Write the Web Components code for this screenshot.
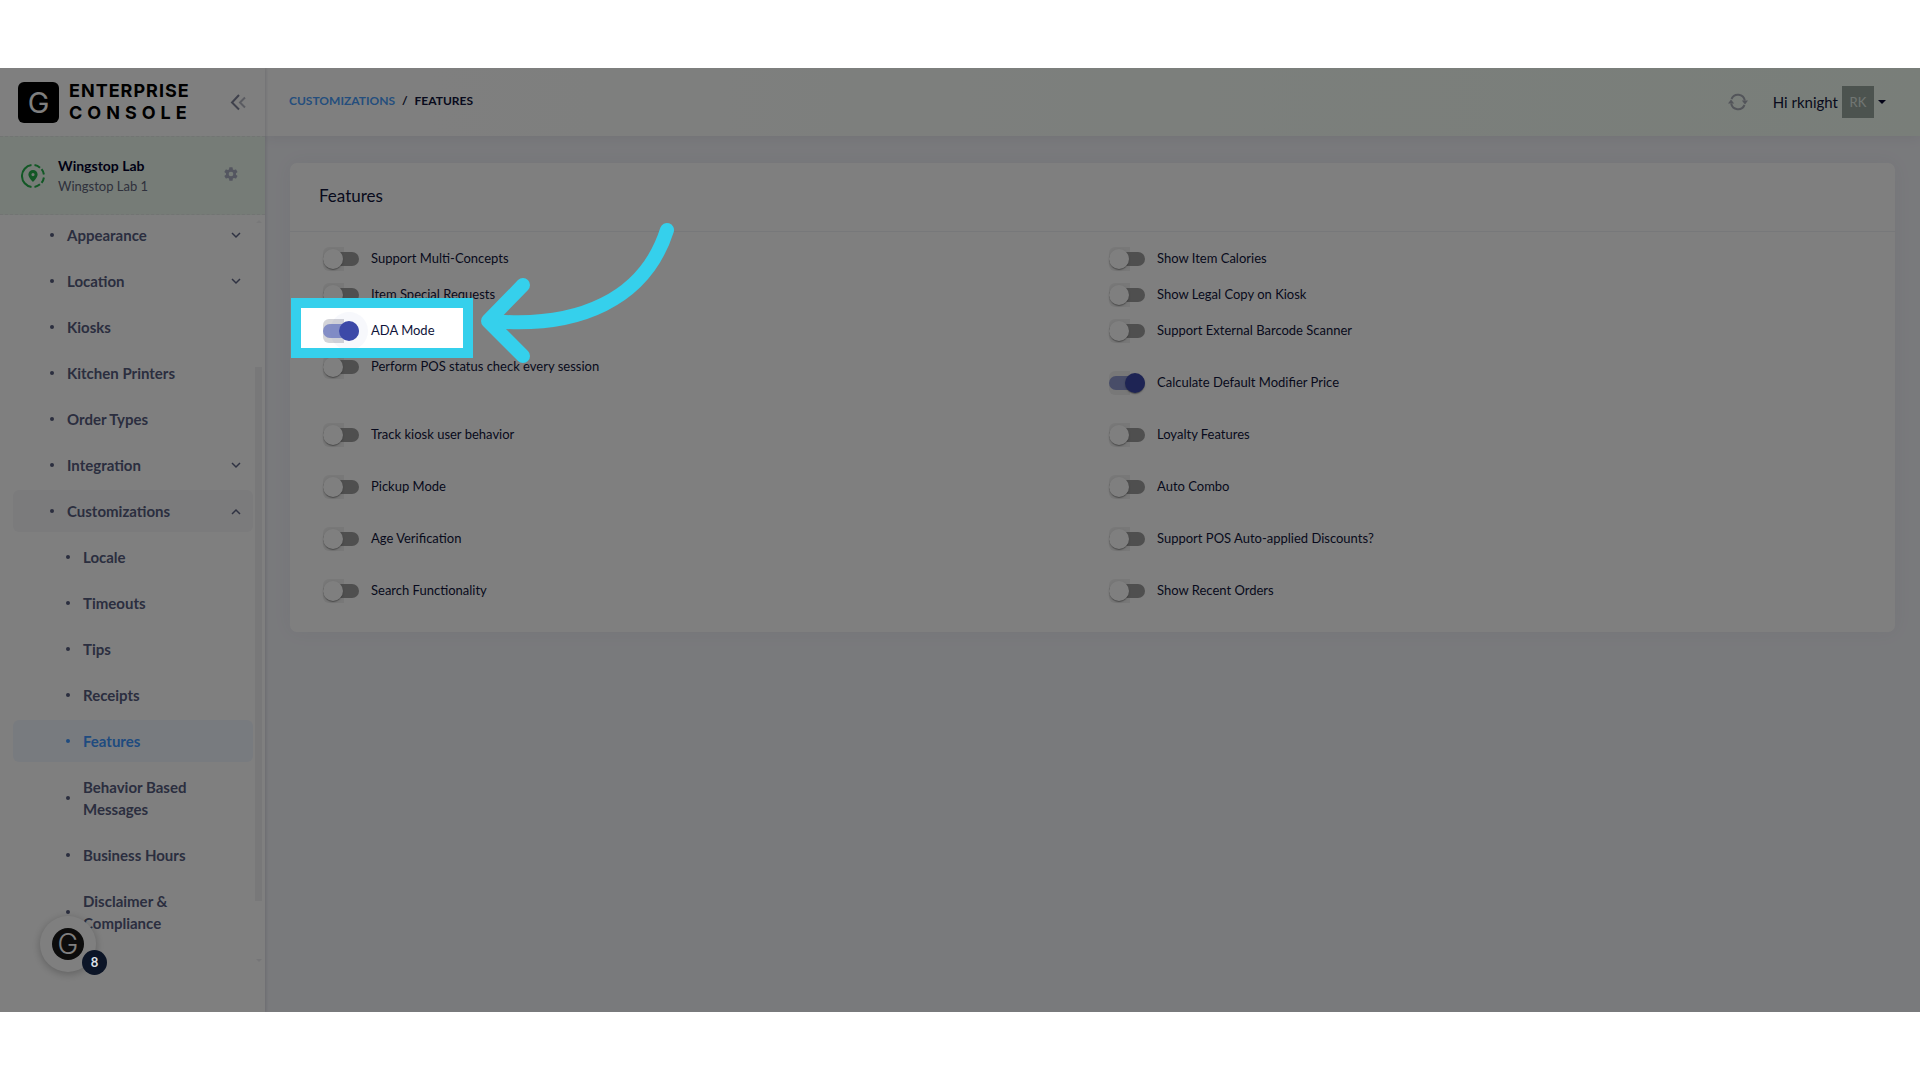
<!DOCTYPE html>
<html lang="en">
<head>
<meta charset="utf-8">
<title>Enterprise Console - Features</title>
<style>
  body {
    margin: 0;
    padding: 68px 0;
    background: #fff;
    color: #10143a;
    font-family: Lato, "Liberation Sans", sans-serif;
    font-size: 13px;
  }
</style>
</head>
<body>
<console-shell>
  <console-sidebar slot="sidebar">
    <nav-item expandable>Appearance</nav-item>
    <nav-item expandable>Location</nav-item>
    <nav-item>Kiosks</nav-item>
    <nav-item>Kitchen Printers</nav-item>
    <nav-item>Order Types</nav-item>
    <nav-item expandable>Integration</nav-item>
    <nav-item expandable open>Customizations
      <nav-item slot="children" sub>Locale</nav-item>
      <nav-item slot="children" sub>Timeouts</nav-item>
      <nav-item slot="children" sub>Tips</nav-item>
      <nav-item slot="children" sub>Receipts</nav-item>
      <nav-item slot="children" sub active>Features</nav-item>
      <nav-item slot="children" sub>Behavior Based Messages</nav-item>
      <nav-item slot="children" sub>Business Hours</nav-item>
      <nav-item slot="children" sub>Disclaimer &amp; Compliance</nav-item>
    </nav-item>
  </console-sidebar>
  <console-header slot="header"></console-header>
  <feature-card heading="Features">
    <feature-switch>Support Multi-Concepts</feature-switch>
    <feature-switch>Show Item Calories</feature-switch>
    <feature-switch>Item Special Requests</feature-switch>
    <feature-switch>Show Legal Copy on Kiosk</feature-switch>
    <feature-switch checked focused>ADA Mode<tour-spotlight slot="overlay"></tour-spotlight></feature-switch>
    <feature-switch>Support External Barcode Scanner</feature-switch>
    <feature-switch>Perform POS status check every session</feature-switch>
    <feature-switch spaced checked>Calculate Default Modifier Price</feature-switch>
    <feature-switch spaced>Track kiosk user behavior</feature-switch>
    <feature-switch spaced>Loyalty Features</feature-switch>
    <feature-switch spaced>Pickup Mode</feature-switch>
    <feature-switch spaced>Auto Combo</feature-switch>
    <feature-switch spaced>Age Verification</feature-switch>
    <feature-switch spaced>Support POS Auto-applied Discounts?</feature-switch>
    <feature-switch spaced>Search Functionality</feature-switch>
    <feature-switch spaced>Show Recent Orders</feature-switch>
  </feature-card>
  <help-launcher slot="launcher" count="8"></help-launcher>
</console-shell>

<script>
class ConsoleShell extends HTMLElement {
  constructor() {
    super();
    this.attachShadow({ mode: 'open' });
    this.shadowRoot.innerHTML = `
      <style>
        :host {
          display: grid;
          grid-template-columns: 265px 1fr;
          min-height: calc(100vh - 136px);
          position: relative;
          overflow: hidden;
          background: #f3f4f9;
        }
        .page { display: flex; flex-direction: column; min-width: 0; }
        main { padding: 27px 25px; }
      </style>
      <slot name="sidebar"></slot>
      <div class="page">
        <slot name="header"></slot>
        <main><slot></slot></main>
      </div>
      <slot name="launcher"></slot>
    `;
  }
}

class ConsoleSidebar extends HTMLElement {
  constructor() {
    super();
    this.attachShadow({ mode: 'open' });
    this.shadowRoot.innerHTML = `
      <style>
        :host {
          display: flex;
          flex-direction: column;
          position: relative;
          background: #fff;
          box-shadow: 1px 0 3px rgba(30, 30, 60, .14);
        }
        button { border: 0; padding: 0; background: none; display: flex; }
        .brand {
          display: flex;
          align-items: center;
          height: 68px;
          box-sizing: border-box;
          padding: 0 18px;
          gap: 10px;
        }
        .mark {
          width: 41px;
          height: 41px;
          border-radius: 6px;
          background: #000;
          color: #fff;
          font: 400 29px/41px Inter, sans-serif;
          text-align: center;
        }
        .name { flex: 1; font: 700 18px/22px Inter, sans-serif; color: #000; }
        .name span { display: block; letter-spacing: 1px; }
        .name .wide { letter-spacing: 5px; }
        .account {
          display: flex;
          align-items: center;
          gap: 13px;
          height: 79px;
          box-sizing: border-box;
          padding: 0 26px 0 21px;
          background: #ecf9ef;
          border-top: 1px dashed #e4e9e6;
          border-bottom: 1px dashed #e4e9e6;
        }
        .account button { margin-bottom: 4px; }
        .who { flex: 1; line-height: 20px; }
        .who strong { display: block; font-size: 14px; color: #00002a; }
        .who span { color: #5e6278; }
        nav {
          flex: 1;
          display: flex;
          flex-direction: column;
          gap: 4px;
          margin-top: -1px;
          padding: 0 12px 40px 13px;
        }
        .bar {
          position: absolute;
          right: 3px;
          top: 152px;
          bottom: 50px;
          width: 7px;
          display: flex;
          flex-direction: column;
          align-items: center;
          justify-content: space-between;
        }
        .thumb { width: 7px; height: 72%; margin-top: 86px; background: #f1f1f3; }
        .up, .down { border: 3px solid transparent; }
        .up { border-bottom-color: #f1f1f3; border-top: 0; }
        .down { border-top-color: #eaeaee; border-bottom: 0; }
      </style>
      <div class="brand">
        <div class="mark">G</div>
        <div class="name"><span>ENTERPRISE</span><span class="wide">CONSOLE</span></div>
        <button aria-label="Collapse menu">
          <svg width="17" height="17" viewBox="0 0 17 17" fill="none" stroke-width="2">
            <path d="M9 1 2 8.500l7 7" stroke="#7e8299"/>
            <path d="M15 3.500 10 8.500l5 5" stroke="#b4b6c2"/>
          </svg>
        </button>
      </div>
      <div class="account">
        <svg width="24" height="24" viewBox="0 0 24 24">
          <g fill="none" stroke="#25b04b" stroke-width="2">
            <path d="M10.500 1.100A11 11 0 0 0 10.500 22.900"/>
            <path d="M13.500 1.100A11 11 0 0 1 19 3.700M20.600 5.200A11 11 0 0 1 22.900 10.500M22.900 13.500A11 11 0 0 1 20.600 18.800M19 20.300A11 11 0 0 1 13.500 22.900"/>
          </g>
          <path fill="#25b04b" fill-rule="evenodd" d="M12 6a4.600 4.600 0 0 0-4.600 4.600C7.400 14 12 18 12 18s4.600-4 4.600-7.400A4.600 4.600 0 0 0 12 6zm0 3a1.600 1.600 0 1 1 0 3.200A1.600 1.600 0 0 1 12 9z"/>
        </svg>
        <div class="who"><strong>Wingstop Lab</strong><span>Wingstop Lab 1</span></div>
        <button aria-label="Location settings">
          <svg width="16" height="16" viewBox="0 0 24 24" fill="#a9acc0">
            <path d="M19.400 13a7.500 7.500 0 0 0 0-2l2.100-1.600a.5.5 0 0 0 .1-.7l-2-3.400a.5.5 0 0 0-.6-.2l-2.500 1a7.300 7.300 0 0 0-1.700-1l-.4-2.700a.5.5 0 0 0-.5-.4h-4a.5.5 0 0 0-.5.4L9 5.100a7.700 7.700 0 0 0-1.700 1l-2.500-1a.5.5 0 0 0-.6.200l-2 3.400a.5.5 0 0 0 .1.700L4.500 11a7.900 7.900 0 0 0 0 2l-2.200 1.600a.5.5 0 0 0-.1.700l2 3.400c.1.200.4.300.6.200l2.500-1a7.300 7.300 0 0 0 1.700 1l.4 2.700c0 .2.200.4.500.4h4c.3 0 .5-.2.500-.4l.4-2.700a7.700 7.700 0 0 0 1.700-1l2.500 1c.2.100.5 0 .6-.2l2-3.400a.5.5 0 0 0-.1-.7zM12 15.500a3.500 3.500 0 1 1 0-7 3.500 3.500 0 0 1 0 7z"/>
          </svg>
        </button>
      </div>
      <nav aria-label="Main"><slot></slot></nav>
      <div class="bar"><i class="up"></i><div class="thumb"></div><i class="down"></i></div>
    `;
  }
}

class NavItem extends HTMLElement {
  constructor() {
    super();
    this.attachShadow({ mode: 'open' });
  }

  connectedCallback() {
    const open = this.hasAttribute('open');
    const arrow = this.hasAttribute('expandable')
      ? `<svg width="10" height="7" viewBox="0 0 10 7" fill="none" stroke="#5e6484" stroke-width="1.500"><path d="${open ? 'M1 6l4-4 4 4' : 'M1 1l4 4 4-4'}"/></svg>`
      : '';
    this.shadowRoot.innerHTML = `
      <style>
        :host { display: block; }
        a {
          display: flex;
          align-items: center;
          gap: 13px;
          padding: 10px 12px 10px 37px;
          border-radius: 6px;
          color: #565c7e;
          font-size: 15px;
          font-weight: 700;
          line-height: 22px;
          text-decoration: none;
        }
        :host([sub]) a { padding-left: 53px; }
        :host([open]) > a { background: #f7f7f9; }
        :host([active]) a { background: #f1f6ff; color: #3e97ff; }
        .dot { width: 4px; height: 4px; border-radius: 50%; background: currentColor; }
        .text { flex: 1; }
        .children { display: flex; flex-direction: column; gap: 4px; padding-top: 4px; }
      </style>
      <a href="#"${this.hasAttribute('active') ? ' aria-current="page"' : ''}>
        <span class="dot"></span>
        <span class="text"><slot></slot></span>
        ${arrow}
      </a>
      ${open ? '<div class="children"><slot name="children"></slot></div>' : ''}
    `;
  }
}

class ConsoleHeader extends HTMLElement {
  constructor() {
    super();
    this.attachShadow({ mode: 'open' });
    this.shadowRoot.innerHTML = `
      <style>
        :host {
          display: flex;
          align-items: center;
          justify-content: space-between;
          height: 68px;
          box-sizing: border-box;
          padding: 0 34px 0 24px;
          background: linear-gradient(90deg, #fff 0%, #fdfffd 20%, #f2fdf3 100%);
          box-shadow: 0 2px 12px rgba(40, 40, 70, .07);
        }
        nav { display: flex; gap: 7px; padding-bottom: 2px; font-size: 12px; font-weight: 700; line-height: 16px; }
        nav a { color: #4a9dfb; text-decoration: none; }
        .user { display: flex; align-items: center; font-size: 15px; }
        button { border: 0; padding: 0; background: none; color: inherit; font: inherit; display: flex; align-items: center; }
        .refresh { margin-right: 25px; }
        .menu { gap: 4px; }
        .avatar {
          width: 32px;
          height: 32px;
          background: #98a69f;
          color: #e2ece5;
          font-size: 13px;
          line-height: 32px;
          text-align: center;
        }
        .caret { border: 4px solid transparent; border-top-color: #06062c; border-bottom: 0; }
      </style>
      <nav aria-label="Breadcrumb"><a href="#">CUSTOMIZATIONS</a><span>/</span><span>FEATURES</span></nav>
      <div class="user">
        <button class="refresh" aria-label="Refresh">
          <svg width="20" height="18" viewBox="0 0 20 18" fill="none" stroke="#a6aab4" stroke-width="2">
            <path d="M3.500 6a7 7 0 0 1 13.300 1.500M16.500 12A7 7 0 0 1 3.200 10.500"/>
            <path fill="#a6aab4" stroke="none" d="M0 10.500 3 6.500l3.200 4zM13.800 7.500h6.200L17 11.500z"/>
          </svg>
        </button>
        <button class="menu"><span>Hi rknight</span><span class="avatar">RK</span><span class="caret"></span></button>
      </div>
    `;
  }
}

class FeatureCard extends HTMLElement {
  constructor() {
    super();
    this.attachShadow({ mode: 'open' });
  }

  connectedCallback() {
    this.shadowRoot.innerHTML = `
      <style>
        :host {
          display: block;
          border-radius: 7px;
          background: #fff;
          box-shadow: 0 0 20px rgba(60, 50, 90, .05);
        }
        h1 {
          margin: 0;
          padding: 21px 29px 23px;
          border-bottom: 1px solid #eff0f5;
          font-size: 17px;
          font-weight: 400;
          line-height: 24px;
        }
        .grid {
          display: grid;
          grid-template-columns: 1fr 1fr;
          align-items: start;
          padding: 8px 17px 24px 16px;
        }
      </style>
      <h1>${this.getAttribute('heading')}</h1>
      <div class="grid"><slot></slot></div>
    `;
  }
}

class FeatureSwitch extends HTMLElement {
  constructor() {
    super();
    this.attachShadow({ mode: 'open' });
  }

  connectedCallback() {
    this.shadowRoot.innerHTML = `
      <style>
        :host {
          display: flex;
          align-items: center;
          position: relative;
          height: 36px;
          padding-left: 17px;
        }
        :host([spaced]) { margin-top: 16px; }
        label { line-height: 20px; padding: 0 0 1px 12px; }
        input {
          appearance: none;
          position: relative;
          width: 36px;
          height: 24px;
          margin: 2px 0 0;
          background: linear-gradient(rgba(0, 0, 0, .06), rgba(0, 0, 0, .06)) 0 0 / 21px 24px no-repeat;
          border-radius: 6px;
        }
        /* track and thumb */
        input::before {
          content: "";
          position: absolute;
          left: 0;
          top: 5px;
          width: 36px;
          height: 14px;
          border-radius: 7px;
          background: #9e9e9e;
        }
        input::after {
          content: "";
          position: absolute;
          left: 0;
          top: 2px;
          width: 20px;
          height: 20px;
          border-radius: 50%;
          background: #fff;
          box-shadow: 0 2px 1px -1px rgba(0, 0, 0, .2), 0 1px 1px rgba(0, 0, 0, .14), 0 1px 3px rgba(0, 0, 0, .12);
        }
        input:checked::before { background: rgba(63, 81, 181, .54); }
        input:checked::after { left: 16px; background: #3c49a8; }
        :host([focused]) input { background: linear-gradient(#d5d5d9, #d5d5d9) 0 0 / 21px 24px no-repeat; }
        :host([focused]) input::after { box-shadow: 0 0 0 9px rgba(63, 81, 181, .04); }
      </style>
      <input type="checkbox" id="toggle"${this.hasAttribute('checked') ? ' checked' : ''}>
      <label for="toggle"><slot></slot></label>
      <slot name="overlay"></slot>
    `;
  }
}

// Highlights the row it is placed in and dims everything else in the shell
class TourSpotlight extends HTMLElement {
  constructor() {
    super();
    this.attachShadow({ mode: 'open' });
    this.shadowRoot.innerHTML = `
      <style>
        :host {
          position: absolute;
          left: -15px;
          top: -14px;
          width: 162px;
          height: 40px;
          border: 10px solid #35d0ec;
          box-shadow: 0 0 0 3000px rgba(0, 0, 0, .5);
          z-index: 10;
          pointer-events: none;
        }
        svg { position: absolute; left: 170px; top: -95px; overflow: visible; }
      </style>
      <svg width="220" height="150" viewBox="0 0 220 150" fill="none" stroke="#35d0ec" stroke-width="14" stroke-linecap="round" stroke-linejoin="round">
        <path d="M196 17C174 86 108 116 20 108"/>
        <path d="M52 72 17 108l35 35"/>
      </svg>
    `;
  }
}

class HelpLauncher extends HTMLElement {
  constructor() {
    super();
    this.attachShadow({ mode: 'open' });
  }

  connectedCallback() {
    this.shadowRoot.innerHTML = `
      <style>
        :host { position: absolute; left: 40px; bottom: 40px; width: 56px; height: 56px; }
        button {
          width: 56px;
          height: 56px;
          padding: 12px;
          border: 0;
          border-radius: 50%;
          background: #fff;
          box-shadow: 0 2px 8px rgba(0, 0, 0, .25);
        }
        .mark {
          display: block;
          border-radius: 50%;
          background: #181818;
          color: #fff;
          font: 300 28px/32px Inter, sans-serif;
        }
        .badge {
          position: absolute;
          left: 42px;
          top: 34px;
          width: 25px;
          height: 25px;
          border-radius: 50%;
          background: #0c1527;
          color: #dde0e6;
          font-size: 13px;
          font-weight: 700;
          line-height: 25px;
          text-align: center;
          z-index: 11;
        }
      </style>
      <button aria-label="Help"><span class="mark">G</span></button>
      <span class="badge">${this.getAttribute('count')}</span>
    `;
  }
}

customElements.define('console-shell', ConsoleShell);
customElements.define('console-sidebar', ConsoleSidebar);
customElements.define('nav-item', NavItem);
customElements.define('console-header', ConsoleHeader);
customElements.define('feature-card', FeatureCard);
customElements.define('feature-switch', FeatureSwitch);
customElements.define('tour-spotlight', TourSpotlight);
customElements.define('help-launcher', HelpLauncher);
</script>
</body>
</html>
